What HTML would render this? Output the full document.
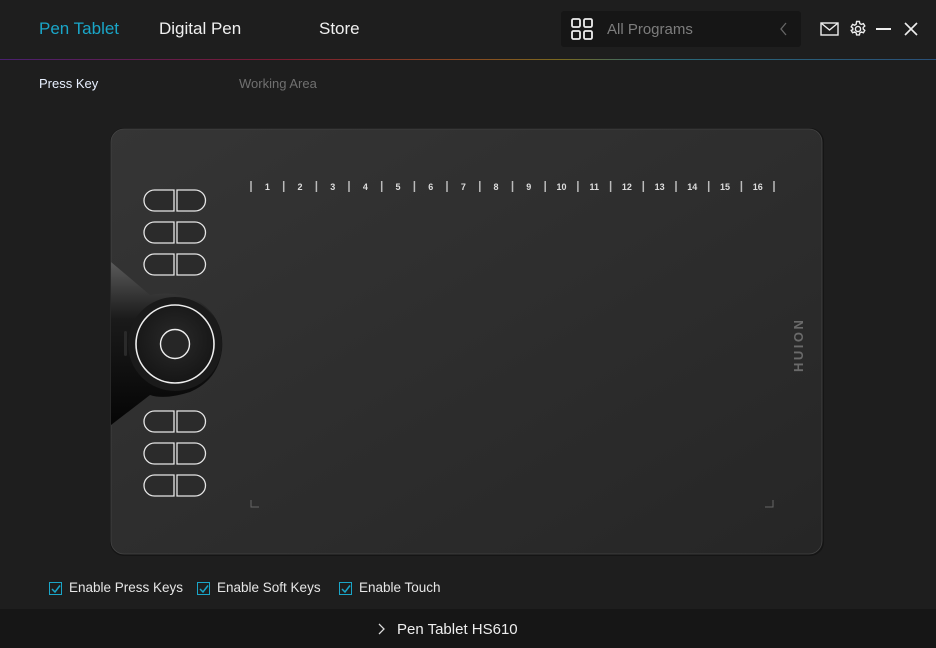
<!DOCTYPE html>
<html><head><meta charset="utf-8"><style>
*{margin:0;padding:0;box-sizing:border-box}
body{width:936px;height:648px;background:#1e1e1e;font-family:"Liberation Sans",sans-serif;position:relative;overflow:hidden}
.a{position:absolute;white-space:nowrap}
.nav{font-size:17px;top:19px;color:#f0f0f0}
.cb{width:13px;height:13px;border:1.5px solid #1aa6c8;position:absolute;top:582px}
.lbl{top:580px;font-size:13.5px;color:#e6e6e6}
</style></head><body>
<div class="a nav" style="left:39px;color:#1aa6c8">Pen Tablet</div>
<div class="a nav" style="left:159px">Digital Pen</div>
<div class="a nav" style="left:319px">Store</div>
<div class="a" style="left:561px;top:11px;width:240px;height:36px;background:#161616;border-radius:3px"></div>
<svg class="a" style="left:570px;top:17px" width="26" height="24"><g fill="none" stroke="#eee" stroke-width="1.8"><rect x="2" y="2" width="8" height="8" rx="1.5"/><rect x="14" y="2" width="8" height="8" rx="1.5"/><rect x="2" y="14" width="8" height="8" rx="1.5"/><rect x="14" y="14" width="8" height="8" rx="1.5"/></g></svg>
<div class="a" style="left:607px;top:21px;font-size:15px;color:#7d7d7d">All Programs</div>
<svg class="a" style="left:778px;top:21px" width="12" height="16"><path d="M8 2 L3 8 L8 14" fill="none" stroke="#666" stroke-width="1.3"/></svg>
<svg class="a" style="left:820px;top:22px" width="20" height="14"><rect x="1" y="1" width="17" height="12" fill="none" stroke="#eee" stroke-width="1.4"/><path d="M1 1 L9.5 8 L18 1" fill="none" stroke="#eee" stroke-width="1.4"/></svg>
<svg class="a" style="left:849px;top:20px" width="18" height="18" viewBox="0 0 18 18"><g fill="none" stroke="#eee" stroke-width="1.4"><circle cx="9" cy="9" r="2.6"/><path d="M7.6 1.5h2.8l.5 2.1 1.5.8 2-.8 1.4 2.4-1.6 1.4v1.6l1.6 1.4-1.4 2.4-2-.8-1.5.8-.5 2.1H7.6l-.5-2.1-1.5-.8-2 .8-1.4-2.4L3.8 9.8V8.2L2.2 6.8l1.4-2.4 2 .8 1.5-.8z"/></g></svg>
<div class="a" style="left:876px;top:28px;width:15px;height:2px;background:#eee"></div>
<svg class="a" style="left:903px;top:21px" width="16" height="16"><path d="M2 2L14 14M14 2L2 14" stroke="#eee" stroke-width="1.6"/></svg>
<div class="a" style="left:0;top:59px;width:936px;height:1px;background:linear-gradient(90deg,#4a2070,#7a1a30 30%,#8a4a20 50%,#7a6a20 60%,#2a6a78 70%,#2a5078)"></div>
<div class="a" style="left:39px;top:76px;font-size:13px;color:#e8f0ff">Press Key</div>
<div class="a" style="left:239px;top:76px;font-size:13px;color:#707070">Working Area</div>

<svg class="a" style="left:0;top:0" width="936" height="648">
<defs>
<linearGradient id="tb" x1="0" y1="0" x2="1" y2="1"><stop offset="0" stop-color="#353535"/><stop offset="1" stop-color="#262626"/></linearGradient>
<linearGradient id="wd" x1="0" y1="0" x2="0" y2="1"><stop offset="0" stop-color="#5a5a5a"/><stop offset=".35" stop-color="#1a1a1a"/><stop offset="1" stop-color="#050505"/></linearGradient>
<radialGradient id="dl" cx=".5" cy=".45" r=".6"><stop offset="0" stop-color="#2a2a2a"/><stop offset="1" stop-color="#141414"/></radialGradient>
</defs>
<rect x="110" y="128" width="714" height="428" rx="14" fill="#151515"/>
<rect x="111" y="129" width="711" height="425" rx="13" fill="url(#tb)" stroke="#444" stroke-width="0.8"/>
<path d="M111 262 L150 295 Q175 290 200 302 Q225 320 222 350 Q218 380 190 392 Q165 400 150 395 L111 425 Z" fill="url(#wd)"/>
<circle cx="175" cy="344" r="47" fill="#1a1a1a"/>
<circle cx="175" cy="344" r="39" fill="url(#dl)" stroke="#eee" stroke-width="1.6"/>
<circle cx="175" cy="344" r="14.5" fill="#262626" stroke="#eee" stroke-width="1.4"/>
<rect x="124" y="331" width="3" height="25" rx="1.5" fill="#2a2a2a"/>
<g fill="#2b2b2b" stroke="#e6e6e6" stroke-width="1.3">
<path id="bl" d="M174 190 H154.5 A10.5 10.5 0 0 0 154.5 211 H174 Z"/>
<path id="br" d="M177 190 H195 A10.5 10.5 0 0 1 195 211 H177 Z"/>
<use href="#bl" y="32"/><use href="#br" y="32"/>
<use href="#bl" y="64"/><use href="#br" y="64"/>
<use href="#bl" y="221"/><use href="#br" y="221"/>
<use href="#bl" y="253"/><use href="#br" y="253"/>
<use href="#bl" y="285"/><use href="#br" y="285"/>
</g>
<g stroke="#bbb" stroke-width="1.5">
<path d="M251 181v11M283.7 181v11M316.4 181v11M349 181v11M381.7 181v11M414.4 181v11M447 181v11M479.8 181v11M512.5 181v11M545.2 181v11M577.9 181v11M610.6 181v11M643.3 181v11M676 181v11M708.7 181v11M741.4 181v11M774 181v11"/>
</g>
<g fill="#ddd" font-size="9" font-weight="bold" text-anchor="middle" font-family="Liberation Sans,sans-serif">
<text x="267.4" y="190">1</text><text x="300" y="190">2</text><text x="332.7" y="190">3</text><text x="365.4" y="190">4</text><text x="398" y="190">5</text><text x="430.7" y="190">6</text><text x="463.4" y="190">7</text><text x="496" y="190">8</text><text x="528.8" y="190">9</text><text x="561.5" y="190">10</text><text x="594.2" y="190">11</text><text x="626.9" y="190">12</text><text x="659.6" y="190">13</text><text x="692.3" y="190">14</text><text x="725" y="190">15</text><text x="757.7" y="190">16</text>
</g>
<path d="M251 500v7h8M773 500v7h-8" fill="none" stroke="#666" stroke-width="1"/>
<text x="0" y="0" transform="translate(803,372) rotate(-90)" fill="#6a6a6a" font-size="13" font-weight="bold" letter-spacing="2.5" font-family="Liberation Sans,sans-serif">HUION</text>
</svg>

<div class="cb" style="left:49px"></div><svg class="a" style="left:51px;top:584px" width="10" height="10"><path d="M1 5L4 8L9 1.5" fill="none" stroke="#1aa6c8" stroke-width="1.5"/></svg>
<div class="a lbl" style="left:69px">Enable Press Keys</div>
<div class="cb" style="left:197px"></div><svg class="a" style="left:199px;top:584px" width="10" height="10"><path d="M1 5L4 8L9 1.5" fill="none" stroke="#1aa6c8" stroke-width="1.5"/></svg>
<div class="a lbl" style="left:217px">Enable Soft Keys</div>
<div class="cb" style="left:339px"></div><svg class="a" style="left:341px;top:584px" width="10" height="10"><path d="M1 5L4 8L9 1.5" fill="none" stroke="#1aa6c8" stroke-width="1.5"/></svg>
<div class="a lbl" style="left:359px">Enable Touch</div>
<div class="a" style="left:0;top:609px;width:936px;height:39px;background:#161616"></div>
<svg class="a" style="left:377px;top:622px" width="10" height="14"><path d="M2 2L7 7L2 12" fill="none" stroke="#ddd" stroke-width="1.3"/></svg>
<div class="a" style="left:397px;top:621px;font-size:15px;color:#eee">Pen Tablet HS610</div>
</body></html>
